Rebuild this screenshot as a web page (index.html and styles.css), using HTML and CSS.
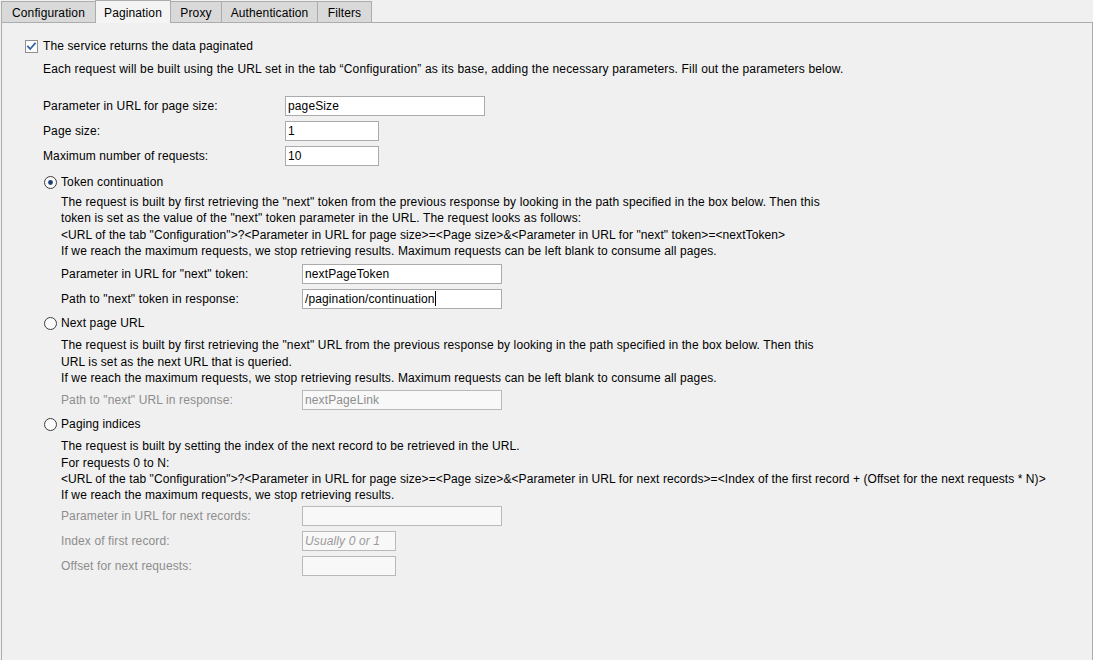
FILE: index.html
```html
<!DOCTYPE html>
<html>
<head>
<meta charset="utf-8">
<link rel="stylesheet" href="styles.css">
</head>
<body>
<div class="frame">
  <div class="tabs">
    <div class="tab tab-config">Configuration</div>
    <div class="tab tab-pagination active">Pagination</div>
    <div class="tab tab-proxy">Proxy</div>
    <div class="tab tab-auth">Authentication</div>
    <div class="tab tab-filters">Filters</div>
  </div>
  <div class="panel">
    <div class="check-row">
      <svg class="checkbox" width="13" height="13" viewBox="0 0 13 13">
        <rect x="0.5" y="0.5" width="12" height="12" fill="#fdfdfd" stroke="#8f8f8f"/>
        <path d="M3 6.6 L5.2 9 L10 3.4" fill="none" stroke="#2b5fa6" stroke-width="1.8" stroke-linecap="square"/>
      </svg>
      <span>The service returns the data paginated</span>
    </div>
    <p class="intro">Each request will be built using the URL set in the tab “Configuration” as its base, adding the necessary parameters. Fill out the parameters below.</p>

    <div class="form form-main">
      <div class="row"><span class="lbl">Parameter in URL for page size:</span><div class="field wide">pageSize</div></div>
      <div class="row"><span class="lbl">Page size:</span><div class="field narrow">1</div></div>
      <div class="row"><span class="lbl">Maximum number of requests:</span><div class="field narrow">10</div></div>
    </div>

    <div class="option opt-first">
      <div class="radio-row">
        <svg class="radio" width="13" height="13" viewBox="0 0 13 13">
          <circle cx="6.5" cy="6.5" r="6" fill="#fbfbfb" stroke="#3c3c3c"/>
          <circle cx="6.5" cy="6.5" r="2.4" fill="#1e3f73"/>
        </svg>
        <span>Token continuation</span>
      </div>
      <div class="desc">
        <div>The request is built by first retrieving the "next" token from the previous response by looking in the path specified in the box below. Then this</div>
        <div>token is set as the value of the "next" token parameter in the URL. The request looks as follows:</div>
        <div class="template">&lt;URL of the tab "Configuration"&gt;?&lt;Parameter in URL for page size&gt;=&lt;Page size&gt;&amp;&lt;Parameter in URL for "next" token&gt;=&lt;nextToken&gt;</div>
        <div>If we reach the maximum requests, we stop retrieving results. Maximum requests can be left blank to consume all pages.</div>
      </div>
      <div class="form form-sub">
        <div class="row"><span class="lbl">Parameter in URL for "next" token:</span><div class="field wide">nextPageToken</div></div>
        <div class="row"><span class="lbl">Path to "next" token in response:</span><div class="field wide">/pagination/continuation<span class="caret"></span></div></div>
      </div>
    </div>

    <div class="option">
      <div class="radio-row">
        <svg class="radio" width="13" height="13" viewBox="0 0 13 13">
          <circle cx="6.5" cy="6.5" r="6" fill="#fbfbfb" stroke="#3c3c3c"/>
        </svg>
        <span>Next page URL</span>
      </div>
      <div class="desc">
        <div>The request is built by first retrieving the "next" URL from the previous response by looking in the path specified in the box below. Then this</div>
        <div>URL is set as the next URL that is queried.</div>
        <div>If we reach the maximum requests, we stop retrieving results. Maximum requests can be left blank to consume all pages.</div>
      </div>
      <div class="form form-sub disabled">
        <div class="row"><span class="lbl">Path to "next" URL in response:</span><div class="field wide">nextPageLink</div></div>
      </div>
    </div>

    <div class="option opt-last">
      <div class="radio-row">
        <svg class="radio" width="13" height="13" viewBox="0 0 13 13">
          <circle cx="6.5" cy="6.5" r="6" fill="#fbfbfb" stroke="#3c3c3c"/>
        </svg>
        <span>Paging indices</span>
      </div>
      <div class="desc">
        <div>The request is built by setting the index of the next record to be retrieved in the URL.</div>
        <div>For requests 0 to N:</div>
        <div class="template">&lt;URL of the tab "Configuration"&gt;?&lt;Parameter in URL for page size&gt;=&lt;Page size&gt;&amp;&lt;Parameter in URL for next records&gt;=&lt;Index of the first record + (Offset for the next requests * N)&gt;</div>
        <div>If we reach the maximum requests, we stop retrieving results.</div>
      </div>
      <div class="form form-sub disabled">
        <div class="row"><span class="lbl">Parameter in URL for next records:</span><div class="field wide"></div></div>
        <div class="row"><span class="lbl">Index of first record:</span><div class="field narrow"><span class="placeholder">Usually 0 or 1</span></div></div>
        <div class="row"><span class="lbl">Offset for next requests:</span><div class="field narrow"></div></div>
      </div>
    </div>
  </div>
</div>
</body>
</html>
```

FILE: styles.css
```css
* { box-sizing: border-box; }
html, body {
  margin: 0;
  padding: 0;
  background: #f0f0f0;
}
body {
  font-family: "Liberation Sans", Arial, sans-serif;
  font-size: 12px;
  letter-spacing: 0.12px;
  color: #000;
  width: 1093px;
  height: 660px;
  overflow: hidden;
}
.frame {
  margin-left: 1px;
  width: 1092px;
  height: 660px;
  display: flex;
  flex-direction: column;
}
.tabs {
  display: flex;
  align-items: flex-end;
  height: 23px;
  border-bottom: 1px solid #acacac;
  flex: none;
}
.tab {
  height: 21px;
  line-height: 19px;
  padding-top: 2px;
  text-align: center;
  background: #d9d9d9;
  border: 1px solid #acacac;
  border-bottom: none;
  margin-right: -1px;
  color: #000;
  white-space: nowrap;
}
.tab-config { width: 95px; }
.tab-pagination { width: 76px; }
.tab-proxy { width: 52px; }
.tab-auth { width: 97px; }
.tab-filters { width: 55px; }
.tab.active {
  height: 23px;
  line-height: 19px;
  padding-top: 3px;
  background: #f4f4f4;
  margin-bottom: -1px;
  position: relative;
  z-index: 1;
}
.panel {
  flex: 1;
  border-left: 1px solid #acacac;
  border-right: 1px solid #acacac;
  padding-top: 15px;
}
.check-row, .radio-row {
  display: flex;
  align-items: center;
  height: 16px;
  line-height: 16px;
}
.check-row {
  padding-left: 23px;
  gap: 5px;
}
.checkbox, .radio { flex: none; }
.intro {
  margin: 7px 0 0 0;
  padding-left: 41px;
  line-height: 16px;
  letter-spacing: 0.17px;
}
.form { display: flex; flex-direction: column; gap: 5px; }
.form-main {
  margin-top: 19px;
  padding-left: 41px;
}
.row {
  display: flex;
  align-items: center;
  height: 20px;
}
.form-main .lbl { width: 242px; flex: none; }
.form-sub .lbl { width: 241px; flex: none; }
.field {
  height: 20px;
  border: 1px solid #ababab;
  background: #fff;
  padding: 0 2px;
  line-height: 18px;
  white-space: nowrap;
  overflow: hidden;
}
.field.wide { width: 200px; }
.field.narrow { width: 94px; }
.caret {
  display: inline-block;
  width: 1px;
  height: 15px;
  background: #000;
  vertical-align: -3px;
}
.disabled .lbl, .disabled .field { color: #8d8d8d; }
.disabled .field { border-color: #b9b9b9; background: #f8f8f8; }
.placeholder { font-style: italic; color: #9a9a9a; }
.option {
  padding-left: 42px;
  margin-top: 6px;
}
.opt-first { margin-top: 8px; }
.radio-row { gap: 4px; }
.desc {
  margin-top: 6px;
  padding-left: 17px;
  line-height: 16.35px;
}
.template { letter-spacing: 0.08px; }
.opt-first .desc { margin-top: 4px; }
.form-sub {
  margin-top: 4px;
  padding-left: 17px;
}
.opt-first .form-sub { margin-top: 5px; }
.opt-last .form-sub { margin-top: 2px; }
```
